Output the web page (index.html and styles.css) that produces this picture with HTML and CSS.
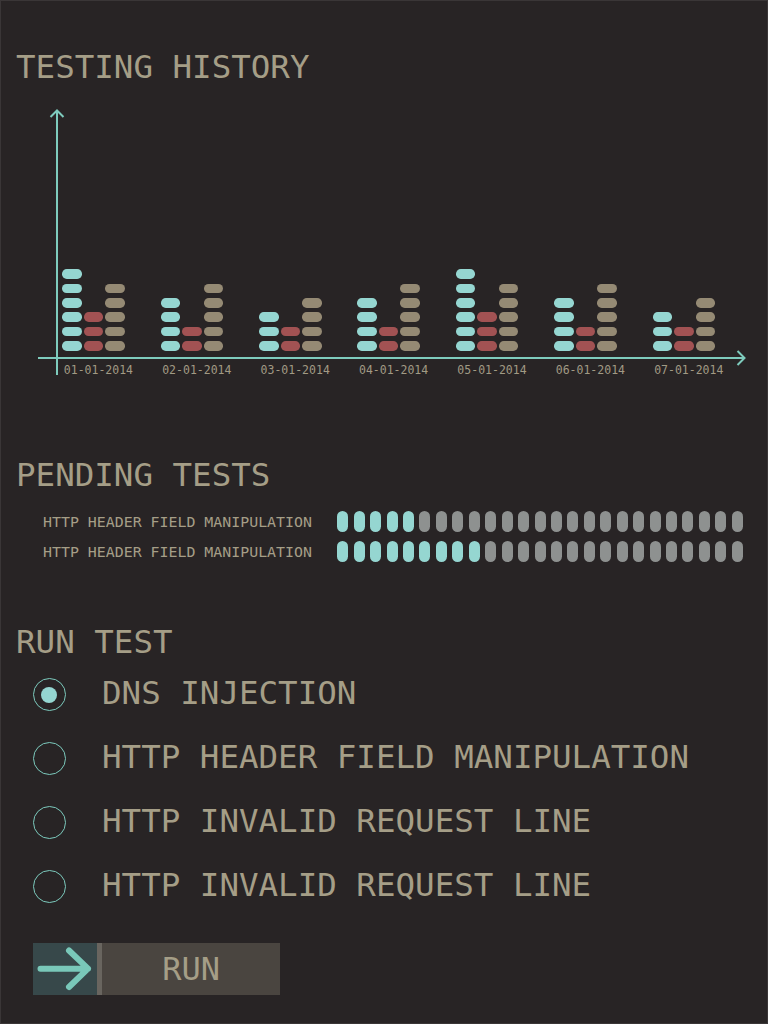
FILE: index.html
```html
<!DOCTYPE html>
<html lang="en">
<head>
<meta charset="utf-8">
<title>Testing Dashboard</title>
<link rel="stylesheet" href="styles.css">
</head>
<body>
<div class="page">
  <section class="history">
    <h1 class="title">TESTING HISTORY</h1>
    <div class="chart">
      <svg class="axes" viewBox="0 0 708 272" width="708" height="272">
        <path d="M19 2 V267 M0 250 H707" stroke="#7ecbbd" stroke-width="2" fill="none"/>
        <path d="M12.5 9 L19 2.5 L25.5 9 M699.5 243 L706.5 250 L699.5 257" stroke="#7ecbbd" stroke-width="2" fill="none"/>
      </svg>
      <div class="plot">
        <div class="group">
          <div class="stack">
            <div class="col"><i class="seg c"></i><i class="seg c"></i><i class="seg c"></i><i class="seg c"></i><i class="seg c"></i><i class="seg c"></i></div>
            <div class="col"><i class="seg r"></i><i class="seg r"></i><i class="seg r"></i></div>
            <div class="col"><i class="seg t"></i><i class="seg t"></i><i class="seg t"></i><i class="seg t"></i><i class="seg t"></i></div>
          </div>
          <span class="date">01-01-2014</span>
        </div>
        <div class="group">
          <div class="stack">
            <div class="col"><i class="seg c"></i><i class="seg c"></i><i class="seg c"></i><i class="seg c"></i></div>
            <div class="col"><i class="seg r"></i><i class="seg r"></i></div>
            <div class="col"><i class="seg t"></i><i class="seg t"></i><i class="seg t"></i><i class="seg t"></i><i class="seg t"></i></div>
          </div>
          <span class="date">02-01-2014</span>
        </div>
        <div class="group">
          <div class="stack">
            <div class="col"><i class="seg c"></i><i class="seg c"></i><i class="seg c"></i></div>
            <div class="col"><i class="seg r"></i><i class="seg r"></i></div>
            <div class="col"><i class="seg t"></i><i class="seg t"></i><i class="seg t"></i><i class="seg t"></i></div>
          </div>
          <span class="date">03-01-2014</span>
        </div>
        <div class="group">
          <div class="stack">
            <div class="col"><i class="seg c"></i><i class="seg c"></i><i class="seg c"></i><i class="seg c"></i></div>
            <div class="col"><i class="seg r"></i><i class="seg r"></i></div>
            <div class="col"><i class="seg t"></i><i class="seg t"></i><i class="seg t"></i><i class="seg t"></i><i class="seg t"></i></div>
          </div>
          <span class="date">04-01-2014</span>
        </div>
        <div class="group">
          <div class="stack">
            <div class="col"><i class="seg c"></i><i class="seg c"></i><i class="seg c"></i><i class="seg c"></i><i class="seg c"></i><i class="seg c"></i></div>
            <div class="col"><i class="seg r"></i><i class="seg r"></i><i class="seg r"></i></div>
            <div class="col"><i class="seg t"></i><i class="seg t"></i><i class="seg t"></i><i class="seg t"></i><i class="seg t"></i></div>
          </div>
          <span class="date">05-01-2014</span>
        </div>
        <div class="group">
          <div class="stack">
            <div class="col"><i class="seg c"></i><i class="seg c"></i><i class="seg c"></i><i class="seg c"></i></div>
            <div class="col"><i class="seg r"></i><i class="seg r"></i></div>
            <div class="col"><i class="seg t"></i><i class="seg t"></i><i class="seg t"></i><i class="seg t"></i><i class="seg t"></i></div>
          </div>
          <span class="date">06-01-2014</span>
        </div>
        <div class="group">
          <div class="stack">
            <div class="col"><i class="seg c"></i><i class="seg c"></i><i class="seg c"></i></div>
            <div class="col"><i class="seg r"></i><i class="seg r"></i></div>
            <div class="col"><i class="seg t"></i><i class="seg t"></i><i class="seg t"></i><i class="seg t"></i></div>
          </div>
          <span class="date">07-01-2014</span>
        </div>
      </div>
    </div>
  </section>

  <section class="pending">
    <h2 class="title">PENDING TESTS</h2>
    <div class="ptests">
      <div class="ptest">
        <span class="ptest-label">HTTP HEADER FIELD MANIPULATION</span>
        <div class="pills">
          <i class="pill on"></i><i class="pill on"></i><i class="pill on"></i><i class="pill on"></i><i class="pill on"></i>
          <i class="pill"></i><i class="pill"></i><i class="pill"></i><i class="pill"></i><i class="pill"></i>
          <i class="pill"></i><i class="pill"></i><i class="pill"></i><i class="pill"></i><i class="pill"></i>
          <i class="pill"></i><i class="pill"></i><i class="pill"></i><i class="pill"></i><i class="pill"></i>
          <i class="pill"></i><i class="pill"></i><i class="pill"></i><i class="pill"></i><i class="pill"></i>
        </div>
      </div>
      <div class="ptest">
        <span class="ptest-label">HTTP HEADER FIELD MANIPULATION</span>
        <div class="pills">
          <i class="pill on"></i><i class="pill on"></i><i class="pill on"></i><i class="pill on"></i><i class="pill on"></i>
          <i class="pill on"></i><i class="pill on"></i><i class="pill on"></i><i class="pill on"></i><i class="pill"></i>
          <i class="pill"></i><i class="pill"></i><i class="pill"></i><i class="pill"></i><i class="pill"></i>
          <i class="pill"></i><i class="pill"></i><i class="pill"></i><i class="pill"></i><i class="pill"></i>
          <i class="pill"></i><i class="pill"></i><i class="pill"></i><i class="pill"></i><i class="pill"></i>
        </div>
      </div>
    </div>
  </section>

  <section class="run">
    <h2 class="title">RUN TEST</h2>
    <div class="options">
      <div class="option"><span class="radio checked"></span><span class="option-text">DNS INJECTION</span></div>
      <div class="option"><span class="radio"></span><span class="option-text">HTTP HEADER FIELD MANIPULATION</span></div>
      <div class="option"><span class="radio"></span><span class="option-text">HTTP INVALID REQUEST LINE</span></div>
      <div class="option"><span class="radio"></span><span class="option-text">HTTP INVALID REQUEST LINE</span></div>
    </div>
    <div class="run-btn">
      <span class="run-icon">
        <svg viewBox="0 0 64 52" width="64" height="52">
          <path d="M7.5 25.7 H55 M36 7.5 L55 25.7 L36 44" stroke="#79c8b9" stroke-width="6" stroke-linecap="round" stroke-linejoin="round" fill="none"/>
        </svg>
      </span>
      <span class="run-divider"></span>
      <span class="run-label">RUN</span>
    </div>
  </section>
</div>
</body>
</html>
```
FILE: styles.css
```css
html, body {
  margin: 0;
  padding: 0;
  background: #282425;
}

.page {
  width: 768px;
  height: 1024px;
  box-sizing: border-box;
  border: 1px solid #3a3637;
  background: #282425;
  padding: 46px 0 0 15px;
  font-family: "DejaVu Sans Mono", monospace;
  color: #a59e87;
  overflow: hidden;
}

.title {
  margin: 0;
  font-size: 32.5px;
  line-height: 40px;
  font-weight: normal;
}

/* chart */
.history .title {
  margin-bottom: 21px;
}

.chart {
  position: relative;
  margin-left: 22px;
  width: 708px;
  height: 272px;
}

.axes {
  position: absolute;
  left: 0;
  top: 0;
  display: block;
}

.plot {
  display: flex;
  gap: 35.9px;
  padding-left: 24.3px;
}

.group {
  display: flex;
  flex-direction: column;
  width: 62.5px;
}

.stack {
  display: flex;
  align-items: flex-end;
  gap: 2px;
  height: 242.7px;
}

.col {
  display: flex;
  flex-direction: column;
  gap: 4.9px;
  width: 19.5px;
}

.seg {
  display: block;
  height: 9.5px;
  border-radius: 4.75px;
}

.seg.c { background: #95d6d1; }
.seg.r { background: #a25253; }
.seg.t { background: #958a74; }

.date {
  margin-top: 12.6px;
  padding-left: 1.5px;
  font-size: 11.5px;
  line-height: 14px;
  white-space: nowrap;
  color: #a19a84;
}

/* pending */
.pending .title {
  margin-top: 75px;
}

.ptests {
  display: flex;
  flex-direction: column;
  gap: 8.7px;
  margin-top: 16px;
}

.ptest {
  display: flex;
  align-items: center;
  height: 21px;
}

.ptest-label {
  width: 295.3px;
  margin-left: 27px;
  padding-top: 2px;
  font-size: 14.9px;
  line-height: 21px;
  white-space: nowrap;
}

.pills {
  display: flex;
  gap: 5.44px;
  margin-left: -1px;
}

.pill {
  display: block;
  width: 11px;
  height: 21px;
  border-radius: 5.5px;
  background: #8e9190;
}

.pill.on {
  background: #95d6d1;
}

/* run test */
.run .title {
  margin-top: 60.3px;
}

.options {
  display: flex;
  flex-direction: column;
  gap: 23.7px;
  margin-top: 13px;
}

.option {
  display: flex;
  align-items: center;
  height: 40px;
}

.radio {
  box-sizing: border-box;
  width: 33px;
  height: 33px;
  margin-left: 16.5px;
  border: 1.4px solid #7ccabd;
  border-radius: 50%;
  display: flex;
  align-items: center;
  justify-content: center;
  flex: none;
}

.radio.checked::after {
  content: "";
  width: 16.7px;
  height: 16.7px;
  border-radius: 50%;
  background: #95d6d1;
}

.option-text {
  margin-left: 36.5px;
  margin-bottom: 3px;
  font-size: 32.5px;
  line-height: 40px;
  white-space: nowrap;
}

.run-btn {
  display: flex;
  width: 247.6px;
  height: 52px;
  margin-top: 37.3px;
  margin-left: 16.7px;
}

.run-icon {
  width: 64.3px;
  background: #37484a;
  display: flex;
  align-items: center;
}

.run-icon svg {
  display: block;
}

.run-divider {
  width: 5px;
  background: #69655f;
}

.run-label {
  flex: 1;
  background: #4a4540;
  display: flex;
  align-items: center;
  justify-content: center;
  font-size: 32px;
  line-height: 40px;
}
```
